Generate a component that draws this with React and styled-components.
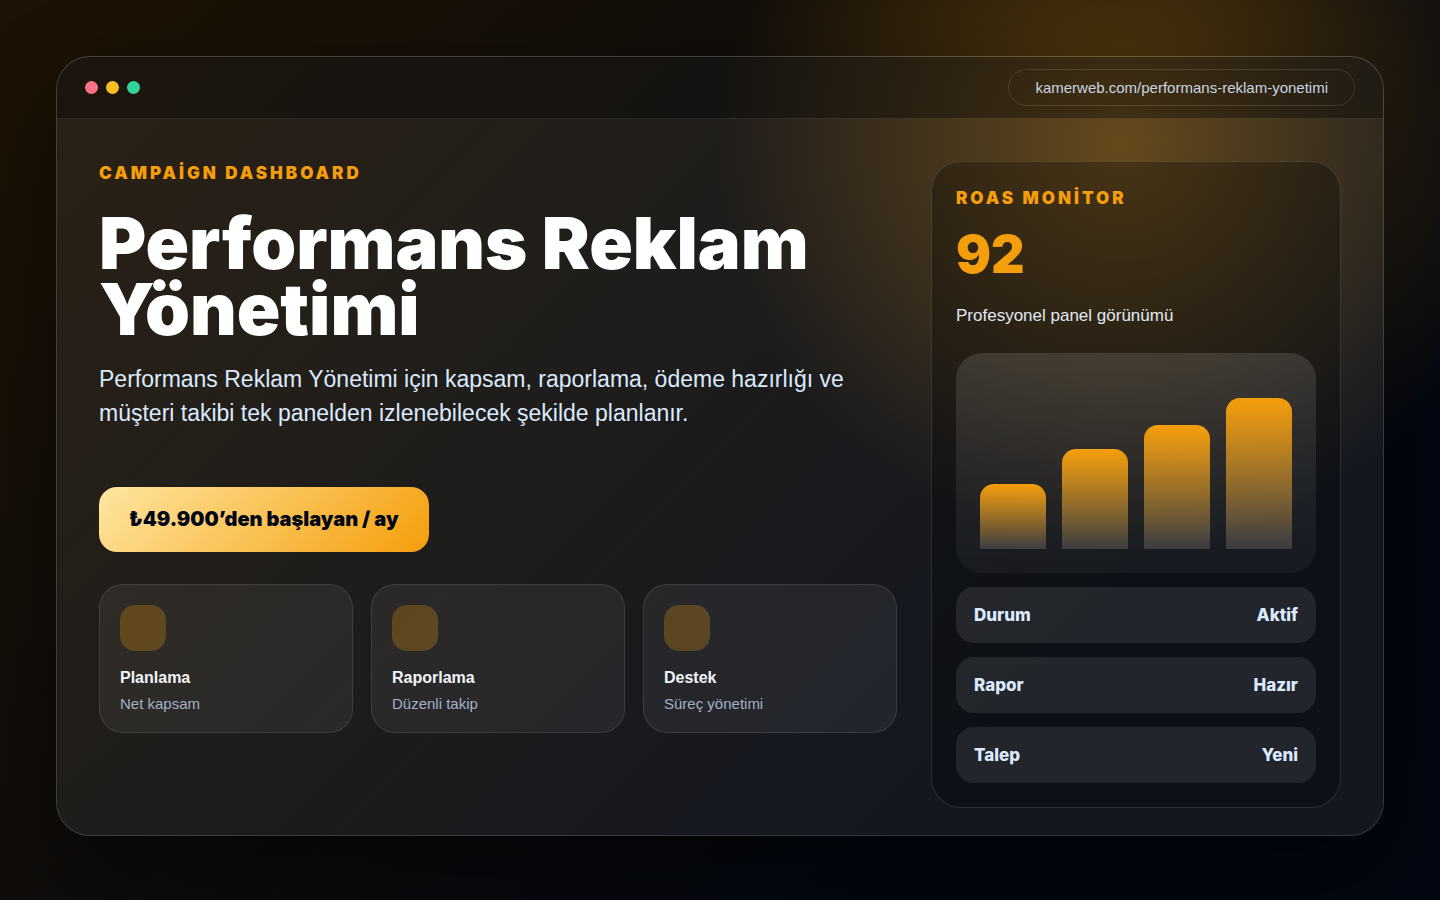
import React from 'react';
import styled, { createGlobalStyle } from 'styled-components';

const GlobalStyle = createGlobalStyle`
  * {
    box-sizing: border-box;
  }

  body {
    margin: 0;
    background: #020711;
    color: #fff;
    font-family: "Liberation Sans", Arial, sans-serif;
  }
`;

const heavy = 'Inter, "Arial Black", sans-serif';

const Page = styled.div`
  display: flex;
  min-height: 100vh;
  padding: 56px 56px 64px;
  background:
    radial-gradient(circle at 78% 16%, rgba(245, 158, 11, 0.34), transparent 30%),
    linear-gradient(135deg, #1e1304, #020711 76%);
`;

const Window = styled.main`
  flex: 1;
  min-width: 0;
  border: 1px solid rgba(255, 255, 255, 0.14);
  border-radius: 34px;
  background: rgba(255, 255, 255, 0.065);
  box-shadow: 0 34px 90px rgba(0, 0, 0, 0.45);
  overflow: hidden;
`;

const TitleBar = styled.header`
  display: flex;
  align-items: center;
  justify-content: space-between;
  padding: 12px 28px;
  border-bottom: 1px solid rgba(255, 255, 255, 0.1);
  background: rgba(0, 0, 0, 0.34);
`;

const Dots = styled.div`
  display: flex;
  gap: 8px;
`;

const Dot = styled.span`
  width: 13px;
  height: 13px;
  border-radius: 50%;
  background: ${({ $color }) => $color};
`;

const Address = styled.div`
  padding: 9px 26px;
  border: 1px solid rgba(255, 255, 255, 0.12);
  border-radius: 999px;
  color: #cbd5e1;
  font-size: 15px;
  line-height: 17px;
`;

const Content = styled.div`
  display: grid;
  grid-template-columns: minmax(0, 1fr) 410px;
  gap: 34px;
  align-items: start;
  padding: 42px 42px 27px;
`;

const Eyebrow = styled.p`
  margin: 0;
  color: #f59e0b;
  font-family: ${heavy};
  font-size: 17px;
  font-weight: 900;
  letter-spacing: 3px;
  line-height: 24px;
`;

const Title = styled.h1`
  margin: 25px 0 0;
  font-family: ${heavy};
  font-size: 72px;
  font-weight: 900;
  line-height: 66px;
`;

const Lead = styled.p`
  margin: 20px 0 0;
  color: #dbeafe;
  font-size: 23px;
  line-height: 34px;
`;

const Price = styled.button`
  display: block;
  margin: 57px 0 32px;
  padding: 20px 30px;
  border: 0;
  border-radius: 18px;
  background: linear-gradient(135deg, #fee6a0, #f59e0b);
  color: #020617;
  font-family: ${heavy};
  font-size: 20px;
  font-weight: 900;
  line-height: 25px;
`;

const Features = styled.div`
  display: grid;
  grid-template-columns: repeat(3, 1fr);
  gap: 18px;
`;

const Feature = styled.article`
  padding: 20px;
  border: 1px solid rgba(255, 255, 255, 0.1);
  border-radius: 24px;
  background: rgba(255, 255, 255, 0.06);
`;

const FeatureIcon = styled.div`
  width: 46px;
  height: 46px;
  border-radius: 15px;
  background: rgba(245, 158, 11, 0.26);
`;

const FeatureTitle = styled.h2`
  margin: 17px 0 7px;
  color: #f1f5f9;
  font-size: 16px;
  line-height: 20px;
`;

const FeatureText = styled.p`
  margin: 0;
  color: #a3b1c8;
  font-size: 15px;
  line-height: 17px;
`;

const Monitor = styled.aside`
  display: grid;
  gap: 14px;
  padding: 24px;
  border: 1px solid rgba(255, 255, 255, 0.12);
  border-radius: 30px;
  background: rgba(0, 0, 0, 0.28);
`;

const Score = styled.strong`
  display: block;
  margin-top: 15px;
  color: #f59e0b;
  font-family: ${heavy};
  font-size: 52px;
  font-weight: 900;
  line-height: 60px;
`;

const MonitorText = styled.p`
  margin: 21px 0 13px;
  color: #e2e8f0;
  font-size: 17px;
  line-height: 20px;
`;

const Chart = styled.div`
  display: flex;
  align-items: flex-end;
  gap: 16px;
  height: 220px;
  padding: 24px;
  border-radius: 26px;
  background: linear-gradient(180deg, rgba(255, 255, 255, 0.12), rgba(255, 255, 255, 0.04));
`;

const Bar = styled.div`
  flex: 1;
  border-radius: 14px 14px 0 0;
  background: linear-gradient(180deg, #f59e0b, rgba(255, 255, 255, 0.14));
`;

const Status = styled.div`
  display: flex;
  align-items: center;
  justify-content: space-between;
  padding: 18px;
  border-radius: 18px;
  background: rgba(255, 255, 255, 0.09);
  color: #dbeafe;
  font-family: ${heavy};
  font-size: 17px;
  font-weight: 800;
  line-height: 20px;
`;

const dots = ['#fb7185', '#fbbf24', '#34d399'];

const features = [
  { title: 'Planlama', text: 'Net kapsam' },
  { title: 'Raporlama', text: 'Düzenli takip' },
  { title: 'Destek', text: 'Süreç yönetimi' },
];

const bars = [38, 58, 72, 88];

const statuses = [
  { label: 'Durum', value: 'Aktif' },
  { label: 'Rapor', value: 'Hazır' },
  { label: 'Talep', value: 'Yeni' },
];

const App = () => (
  <>
    <GlobalStyle />
    <Page lang="tr">
      <Window>
        <TitleBar>
          <Dots>
            {dots.map((color) => (
              <Dot key={color} $color={color} />
            ))}
          </Dots>
          <Address>kamerweb.com/performans-reklam-yonetimi</Address>
        </TitleBar>
        <Content>
          <section>
            <Eyebrow>CAMPAİGN DASHBOARD</Eyebrow>
            <Title>Performans Reklam Yönetimi</Title>
            <Lead>
              Performans Reklam Yönetimi için kapsam, raporlama, ödeme hazırlığı ve müşteri takibi
              tek panelden izlenebilecek şekilde planlanır.
            </Lead>
            <Price type="button">₺49.900’den başlayan / ay</Price>
            <Features>
              {features.map(({ title, text }) => (
                <Feature key={title}>
                  <FeatureIcon />
                  <FeatureTitle>{title}</FeatureTitle>
                  <FeatureText>{text}</FeatureText>
                </Feature>
              ))}
            </Features>
          </section>
          <Monitor>
            <div>
              <Eyebrow>ROAS MONİTOR</Eyebrow>
              <Score>92</Score>
              <MonitorText>Profesyonel panel görünümü</MonitorText>
            </div>
            <Chart>
              {bars.map((value) => (
                <Bar key={value} style={{ height: `${value}%` }} />
              ))}
            </Chart>
            {statuses.map(({ label, value }) => (
              <Status key={label}>
                <span>{label}</span>
                <span>{value}</span>
              </Status>
            ))}
          </Monitor>
        </Content>
      </Window>
    </Page>
  </>
);

export default App;
